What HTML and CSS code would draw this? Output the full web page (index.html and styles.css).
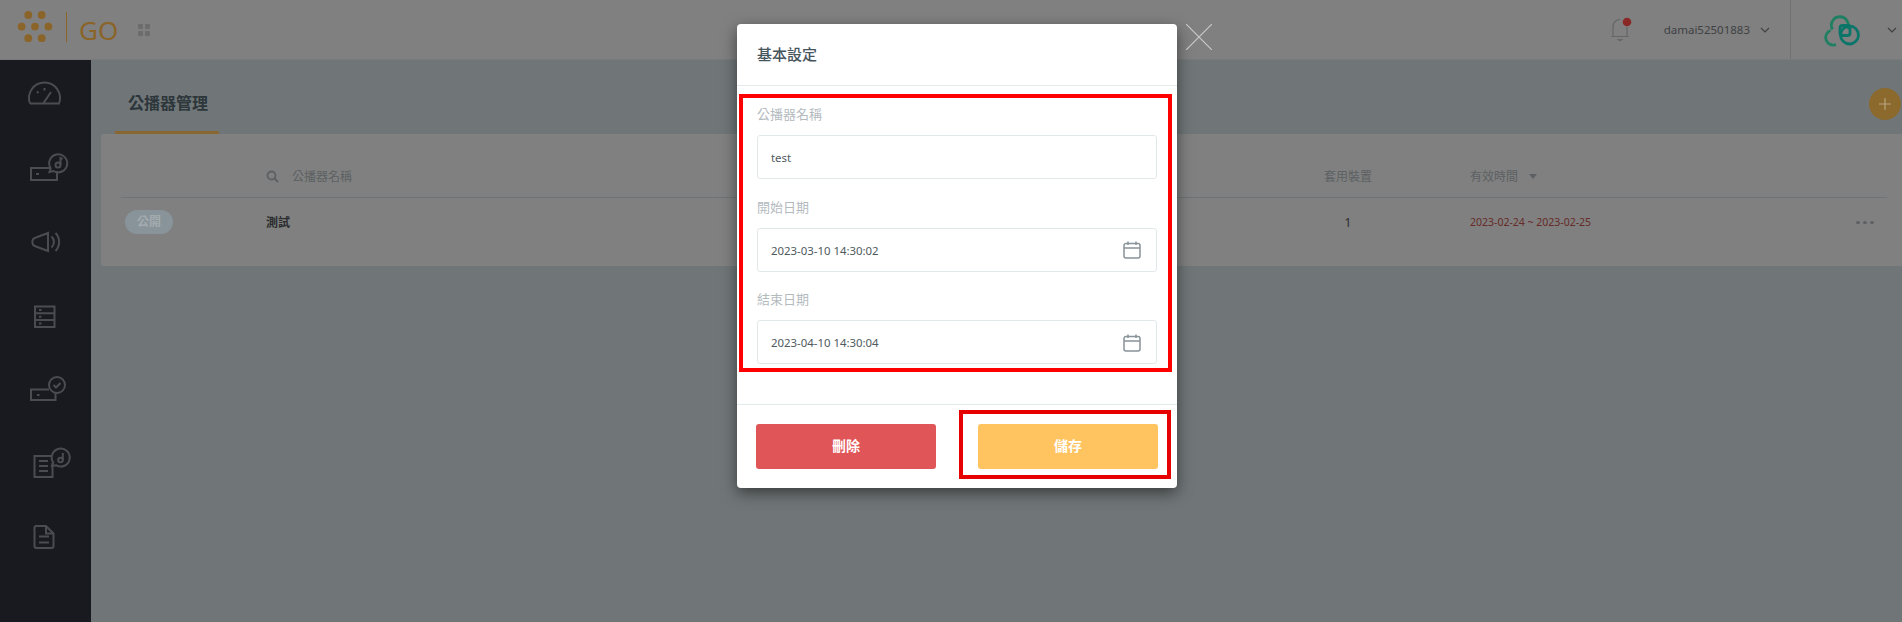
FILE: index.html
```html
<!DOCTYPE html>
<html lang="zh-Hant">
<head>
<meta charset="utf-8">
<title>公播器管理</title>
<link rel="stylesheet" href="styles.css">
</head>
<body>
<div class="app">
  <header class="topbar">
    <svg class="brand-mark" viewBox="0 0 67 60" width="67" height="60">
      <g class="gold-fill">
        <circle cx="28.3" cy="15" r="3.9"/><circle cx="41.7" cy="15" r="3.9"/>
        <circle cx="21.6" cy="26.6" r="3.9"/><circle cx="35" cy="26.6" r="3.9"/><circle cx="48.4" cy="26.6" r="3.9"/>
        <circle cx="28.3" cy="38.2" r="3.9"/><circle cx="41.7" cy="38.2" r="3.9"/>
      </g>
      <rect class="gold-fill" x="66" y="12" width="1" height="30"/>
    </svg>
    <span class="brand-name">GO</span>
    <span class="apps"><i></i><i></i><i></i><i></i></span>
    <div class="top-right">
      <svg class="bell" viewBox="1608 14 26 28" width="26" height="28">
        <path class="bell-line" d="M1611 34.5h18M1613 34V25a7 7 0 0 1 7-7.500M1627 25v9"/>
        <path class="bell-tip" d="M1616.500 37h7l-3.500 2.500z"/>
        <circle class="bell-dot" cx="1627" cy="20" r="4.300"/>
      </svg>
      <span class="user">damai52501883</span>
      <svg class="chev" viewBox="0 0 10 6" width="10" height="6"><path d="M1 1l4 4 4-4"/></svg>
      <div class="org">
        <svg class="org-logo" viewBox="1822 10 42 34" width="42" height="34">
          <path class="ring-a" d="M1836 41.500A7.500 7.500 0 0 1 1830.500 27.500"/>
          <path class="ring-a" d="M1832.500 26.500A8.500 8.500 0 1 1 1847.500 26"/>
          <circle class="ring-b" cx="1849.500" cy="32" r="9"/>
          <rect class="ring-b" x="1840" y="22.500" width="10" height="10" rx="2.500"/>
        </svg>
        <svg class="chev" viewBox="0 0 10 6" width="10" height="6"><path d="M1 1l4 4 4-4"/></svg>
      </div>
    </div>
  </header>
  <div class="below">
    <nav class="sidebar">
      <svg class="nav-icon" viewBox="24 74 50 40"><path d="M30 103.500A15.500 15.500 0 1 1 59 103.500H30M37 91.500l1.500 1.500M44.500 88v2.500M43.500 103l7.500-11"/></svg>
      <svg class="nav-icon" viewBox="24 148 50 40"><path d="M50 168H31v12h26v-9M36 174h3"/><path d="M49.500 172l1.200-3.700a9 9 0 1 1 2.800 2.700z"/><circle cx="58" cy="165" r="2.500"/><path d="M60.500 165v-7l2 1"/></svg>
      <svg class="nav-icon" viewBox="24 222 50 40"><path d="M48 233v18l-12-4.500a4.600 4.600 0 0 1 0-9zM51.500 236.500a7.500 7.500 0 0 1 0 11M55.500 233a13 13 0 0 1 0 18"/></svg>
      <svg class="nav-icon" viewBox="24 296 50 40"><path d="M35 306.500h19.500v20.500H35zM35 313.300h19.500M35 320.100h19.500M39 310h2.500M39 316.800h2.500M39 323.600h2.500"/></svg>
      <svg class="nav-icon" viewBox="24 370 50 40"><path d="M49 389.500H31v10.500h24.500v-8M37 395h2.500"/><circle cx="57" cy="385" r="8"/><path d="M53.500 385l2.500 2.500 4.500-4.500"/></svg>
      <svg class="nav-icon" viewBox="24 444 50 40"><path d="M52.500 463v14h-18v-21h17M39 461h9M39 466h9M39 471h9"/><path d="M52 466l1.200-3.500a9 9 0 1 1 2.800 2.700z"/><circle cx="60.500" cy="460" r="2.300"/><path d="M62.800 460v-7"/></svg>
      <svg class="nav-icon" viewBox="24 518 50 40"><path d="M36.500 526H46l7.500 7.500V546a2 2 0 0 1-2 2h-15a2 2 0 0 1-2-2V528a2 2 0 0 1 2-2zM46 526v7.500h7.500M39 536.500h10M39 542.500h10"/></svg>
    </nav>
    <main class="content">
      <div class="page-head">
        <h1 class="tab">公播器管理</h1>
        <button class="add" type="button" aria-label="新增">
          <svg viewBox="0 0 12 12" width="12" height="12"><path d="M6 0v12M0 6h12"/></svg>
        </button>
      </div>
      <section class="card">
        <div class="grid-row grid-head">
          <span></span>
          <span class="search-col">
            <svg class="search" viewBox="0 0 13 13" width="13" height="13"><circle cx="5.500" cy="5.500" r="4"/><path d="M8.500 8.500l3.500 3.500"/></svg>
            公播器名稱
          </span>
          <span>套用裝置</span>
          <span class="date-col">有效時間<i class="caret"></i></span>
        </div>
        <div class="grid-row grid-body">
          <span><b class="badge">公開</b></span>
          <b class="name">測試</b>
          <span class="count">1</span>
          <span class="date-col expired"><span class="date-text">2023-02-24 ~ 2023-02-25</span><span class="more"><i></i><i></i><i></i></span></span>
        </div>
      </section>
    </main>
  </div>

  <div class="backdrop">
    <div class="modal">
      <svg class="close" viewBox="0 0 26 26" width="26" height="26"><path d="M0 0l26 26M26 0L0 26"/></svg>
      <div class="modal-head">基本設定</div>
      <div class="modal-body">
        <div class="group">
          <label class="label">公播器名稱</label>
          <div class="field"><input class="input" value="test"></div>
        </div>
        <div class="group">
          <label class="label">開始日期</label>
          <div class="field"><input class="input" value="2023-03-10 14:30:02">
            <svg class="cal" viewBox="0 0 18 18" width="18" height="18"><path d="M3 2.500h12a2 2 0 0 1 2 2V15a2 2 0 0 1-2 2H3a2 2 0 0 1-2-2V4.500a2 2 0 0 1 2-2zM1 7h16M5 .5v3.500M13 .5v3.500"/></svg>
          </div>
        </div>
        <div class="group">
          <label class="label">結束日期</label>
          <div class="field"><input class="input" value="2023-04-10 14:30:04">
            <svg class="cal" viewBox="0 0 18 18" width="18" height="18"><path d="M3 2.500h12a2 2 0 0 1 2 2V15a2 2 0 0 1-2 2H3a2 2 0 0 1-2-2V4.500a2 2 0 0 1 2-2zM1 7h16M5 .5v3.500M13 .5v3.500"/></svg>
          </div>
        </div>
      </div>
      <div class="modal-foot">
        <button class="btn btn-del" type="button">刪除</button>
        <button class="btn btn-save" type="button">儲存</button>
      </div>
      <div class="mark mark-fields"></div>
      <div class="mark mark-save"></div>
    </div>
  </div>
</div>
</body>
</html>
```
FILE: styles.css
```css
* { box-sizing: border-box; }
html, body { margin: 0; height: 100%; overflow: hidden; }
body {
  font-family: "Noto Sans", "Noto Sans CJK TC", sans-serif;
  font-size: 12px;
  background: #707678;
}
.app { position: relative; height: 622px; display: flex; flex-direction: column; }

/* top bar */
.topbar {
  height: 60px; flex: none; display: flex; align-items: center;
  background: #808080; border-bottom: 1px solid #777b7c;
}
.gold-fill { fill: #8a6428; }
.brand-mark { flex: none; }
.brand-name {
  margin-left: 12px; font-size: 26px; font-weight: 400; color: #8a6428;
  line-height: 1; letter-spacing: 0;
}
.apps {
  margin-left: 20px; display: grid; grid-template-columns: 5px 5px; gap: 2px;
}
.apps i { width: 5px; height: 5px; background: #6c6c6c; border-radius: 1px; }
.top-right { margin-left: auto; display: flex; align-items: center; height: 100%; }
.bell { display: block; }
.bell-line { fill: none; stroke: #646667; stroke-width: 1.2; }
.bell-tip { fill: #646667; }
.bell-dot { fill: #8a2825; }
.user { margin-left: 30px; color: #3f4143; font-size: 11.500px; }
.chev { display: block; margin-left: 10px; fill: none; stroke: #3f4143; stroke-width: 1.2; }
.org {
  margin-left: 20px; height: 100%; display: flex; align-items: center;
  border-left: 1px solid #6e7274; padding-left: 31px; padding-right: 5px;
}
.org-logo { display: block; }
.org .chev { margin-left: 23px; }
.ring-a { fill: none; stroke: #1f7f62; stroke-width: 2.800; }
.ring-b { fill: none; stroke: #0b756a; stroke-width: 2.800; }

/* sidebar */
.below { flex: 1; display: flex; min-height: 0; }
.sidebar {
  width: 91px; flex: none; background: #181a1f;
  display: flex; flex-direction: column; padding: 14px 0 0 24px; gap: 34px;
}
.nav-icon {
  width: 50px; height: 40px; display: block; flex: none;
  fill: none; stroke: #4b4c50; stroke-width: 2;
}

/* content */
.content { flex: 1; min-width: 0; padding-left: 10px; }
.page-head {
  height: 74px; display: flex; justify-content: space-between; align-items: flex-start;
  padding-left: 14px;
}
.tab {
  margin: 0; width: 104px; height: 74px; padding: 0 0 0 13px;
  line-height: 86px; font-size: 16px; font-weight: 700; color: #2d363b;
  border-bottom: 3px solid #8a6730;
  white-space: nowrap;
}
.add {
  width: 32px; height: 32px; margin: 28px 1px 0 0; padding: 0; border: 0; border-radius: 50%;
  background: #8c6a2e; display: flex; align-items: center; justify-content: center;
}
.add svg { fill: none; stroke: #b8a47e; stroke-width: 1.200; }
.card {
  height: 132px; background: #808080; border-radius: 3px 0 0 3px; padding: 0 15px 0 20px;
}
.grid-row {
  display: grid; grid-template-columns: 145px 1fr 48px 515px; align-items: center;
}
.grid-head { height: 64px; padding-top: 21px; border-bottom: 1px solid #6e7477; color: #5c6063; }
.grid-body { height: 68px; padding-bottom: 20px; color: #2a2c2e; }
.search-col { display: flex; align-items: center; gap: 13px; }
.search { display: block; fill: none; stroke: #5c6063; stroke-width: 1.800; }
.date-col { padding-left: 98px; display: flex; align-items: center; }
.caret {
  margin-left: 11px; width: 0; height: 0;
  border: 4px solid transparent; border-top: 5px solid #5c6063; border-bottom: 0;
}
.badge {
  display: inline-block; width: 48px; height: 24px; margin-left: 4px; border-radius: 12px;
  background: #88949a; color: #a4abae; text-align: center; line-height: 24px; font-weight: 700;
}
.name { font-weight: 700; margin-top: 0; }
.count { text-align: center; }
.expired { color: #662a27; }
.date-text { font-size: 10.500px; }
.more { margin-left: auto; margin-right: 13px; display: flex; gap: 3px; }
.more i { width: 4px; height: 3px; border-radius: 50%; background: #5c6063; }

/* dialog */
.backdrop {
  position: absolute; inset: 0; display: flex; justify-content: center;
  padding: 24px 0 0 12px;
}
.modal {
  position: relative; width: 440px; height: 464px; background: #fff; border-radius: 4px;
  box-shadow: 0 5px 15px rgba(0, 0, 0, .5);
}
.close {
  position: absolute; left: calc(100% + 9px); top: 0; fill: none; stroke: #c8c8c8; stroke-width: 1.200;
}
.modal-head {
  height: 62px; padding: 0 20px; line-height: 60px; font-size: 15px; font-weight: 500;
  color: #46545c; border-bottom: 1px solid #e3eaec;
}
.modal-body { height: 319px; padding: 19px 20px 0; border-bottom: 1px solid #e3eaec; }
.group { margin-bottom: 17.500px; height: 75px; }
.label { display: block; font-size: 13px; line-height: 19.500px; margin-bottom: 10.500px; color: #b4bbbf; }
.field {
  height: 44px; display: flex; align-items: center; padding: 1px 15px 0 13px;
  border: 1px solid #e2e8ea; border-radius: 3px;
}
.input {
  flex: 1; min-width: 0; border: 0; outline: 0; padding: 0; background: none;
  font: inherit; font-size: 11.400px; color: #4f5a60;
}
.cal { flex: none; display: block; fill: none; stroke: #88939a; stroke-width: 1.500; }
.modal-foot { display: flex; justify-content: space-between; padding: 19px; }
.btn {
  width: 180px; height: 45px; border: 0; border-radius: 3px; padding: 0 0 4px;
  font: inherit; font-size: 14px; font-weight: 700; color: #fff;
}
.btn-del { background: #e05558; }
.btn-save { background: #ffc35f; }
.mark { position: absolute; border: 4px solid #f00; pointer-events: none; }
.mark-fields { left: 2px; top: 70px; width: 433px; height: 278px; }
.mark-save { left: 222px; top: 386px; width: 212px; height: 69px; border-color: #e60000; }
```
